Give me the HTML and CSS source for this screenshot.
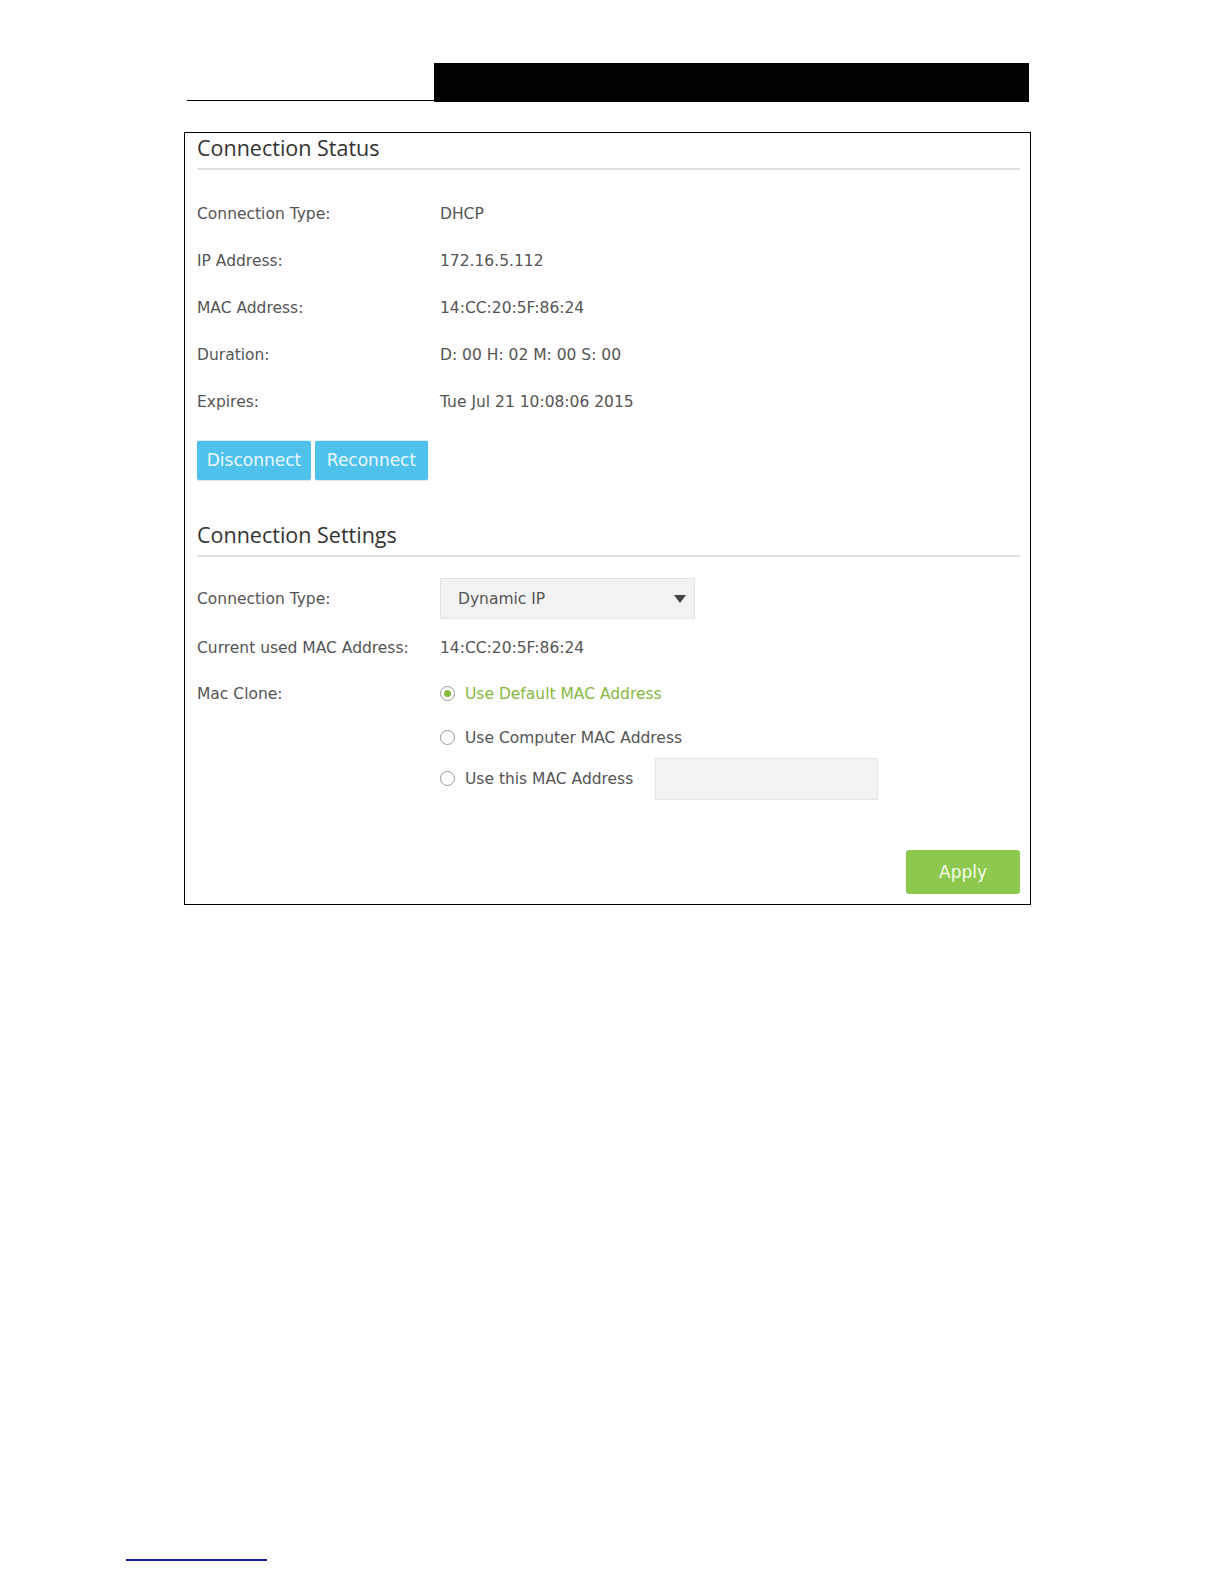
FILE: index.html
```html
<!DOCTYPE html>
<html lang="en">

<head>
    <meta charset="UTF-8">
    <meta name="viewport" content="width=device-width, initial-scale=1.0">
    <title>Internet</title>
    <link rel="stylesheet" href="styles.css">
</head>

<body>
    <div id="page">
        <div class="head">
            <div class="head-line"></div>
            <div class="head-bar"></div>
        </div>

        <div id="panel">
            <h2 class="title">Connection Status</h2>
            <div class="row"><span class="label">Connection Type:</span><span class="val">DHCP</span></div>
            <div class="row"><span class="label">IP Address:</span><span class="val">172.16.5.112</span></div>
            <div class="row"><span class="label">MAC Address:</span><span class="val">14:CC:20:5F:86:24</span></div>
            <div class="row"><span class="label">Duration:</span><span class="val">D: 00 H: 02 M: 00 S: 00</span></div>
            <div class="row"><span class="label">Expires:</span><span class="val">Tue Jul 21 10:08:06 2015</span></div>
            <div class="btns">
                <span class="btn blue">Disconnect</span>
                <span class="btn blue">Reconnect</span>
            </div>

            <h2 class="title title2">Connection Settings</h2>
            <div class="row row-sel">
                <span class="label">Connection Type:</span>
                <div class="select">
                    <span>Dynamic IP</span>
                    <span class="arrow"></span>
                </div>
            </div>
            <div class="row"><span class="label">Current used MAC Address:</span><span class="val">14:CC:20:5F:86:24</span></div>
            <div class="row row-clone">
                <span class="label">Mac Clone:</span>
                <div class="radios">
                    <div class="radio on"><span class="dot"></span>Use Default MAC Address</div>
                    <div class="radio"><span class="dot"></span>Use Computer MAC Address</div>
                    <div class="radio"><span class="dot"></span>Use this MAC Address<span class="input"></span></div>
                </div>
            </div>
            <div class="foot">
                <span class="btn green">Apply</span>
            </div>
        </div>

        <div class="note-line"></div>
    </div>
</body>

</html>
```

FILE: styles.css
```css
* {
    margin: 0;
    padding: 0;
    box-sizing: border-box;
}

html,
body {
    overflow: hidden;
}

body {
    font-family: "DejaVu Sans", Verdana, sans-serif;
    color: #555;
    background: #fff;
}

#page {
    padding-top: 63px;
}

.head {
    display: flex;
    margin-left: 187px;
    align-items: flex-end;
}

.head-line {
    width: 247px;
    height: 1px;
    background: #000;
    margin-bottom: 1px;
}

.head-bar {
    width: 595px;
    height: 39px;
    background: #000;
}

#panel {
    width: 847px;
    margin: 30px 0 0 184px;
    border: 1px solid #000;
    padding: 0 10px 10px 12px;
}

.title {
    font-family: "Open Sans", "Noto Sans", sans-serif;
    font-weight: normal;
    font-size: 21.5px;
    color: #333;
    line-height: 28px;
    padding-top: 1px;
    padding-bottom: 6px;
    border-bottom: 2px solid #e2e2e2;
    margin-bottom: 20px;
}

.title2 {
    margin-top: 40px;
    margin-bottom: 21px;
}

.row {
    display: flex;
    align-items: center;
    height: 47px;
    font-size: 15.5px;
}

.label {
    width: 243px;
    flex-shrink: 0;
}

.btns {
    display: flex;
    gap: 4px;
    margin-top: 15px;
}

.btn {
    display: inline-block;
    height: 40px;
    line-height: 40px;
    text-align: center;
    color: #fff;
    font-size: 17px;
    border-radius: 2px;
}

.blue {
    width: 114px;
    background: #4ec2ea;
    color: #eaf8fd;
    border-top: 1px solid #d8eef0;
    line-height: 38px;
    box-shadow: 0 1px 1px rgba(0, 0, 0, 0.12);
}

.btns .blue + .blue {
    width: 113px;
}

.row-sel {
    height: 41px;
}

.select {
    width: 255px;
    height: 41px;
    background: #f2f2f2;
    border: 1px solid #e4e4e4;
    display: flex;
    align-items: center;
    justify-content: space-between;
    padding: 0 8px 0 17px;
    color: #555;
}

.arrow {
    width: 0;
    height: 0;
    border-left: 6px solid transparent;
    border-right: 6px solid transparent;
    border-top: 8px solid #444;
}

.row-sel + .row {
    margin-top: 5px;
}

.row-clone {
    align-items: flex-start;
    height: auto;
}

.row-clone .label {
    line-height: 47px;
}

.radios {
    display: flex;
    flex-direction: column;
}

.radio {
    display: flex;
    align-items: center;
    height: 41px;
    color: #555;
}

.radio:first-child {
    height: 46px;
    padding-bottom: 1px;
}

.radio.on {
    color: #86b93e;
}

.dot {
    width: 15px;
    height: 15px;
    border: 1px solid #999;
    border-radius: 50%;
    margin-right: 10px;
    position: relative;
}

.on .dot::after {
    content: "";
    position: absolute;
    left: 3px;
    top: 3px;
    width: 7px;
    height: 7px;
    border-radius: 50%;
    background: #86b93e;
}

.input {
    width: 223px;
    height: 42px;
    background: #f3f3f3;
    border: 1px solid #e6e6e6;
    margin-left: 22px;
}

.foot {
    display: flex;
    justify-content: flex-end;
    margin-top: 51px;
}

.green {
    width: 114px;
    height: 44px;
    line-height: 44px;
    background: #8dc94f;
    color: #f4fbe8;
    border-radius: 3px;
}

.note-line {
    width: 141px;
    height: 2px;
    margin: 654px 0 0 126px;
    background: #1a1aa0;
}
```
